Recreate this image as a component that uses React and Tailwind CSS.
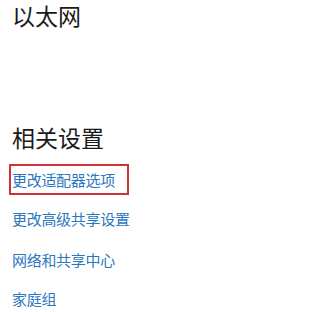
export default function App() {
  const font = { fontFamily: '"Noto Sans CJK SC", "Noto Sans", sans-serif' };
  return (
    <div className="w-[305px] h-[312px] bg-white overflow-hidden" style={font}>
      <div className="flex flex-col pl-[12px] pt-[2px]">
        <div className="text-[23px] leading-[26px] text-[#1a1a1a]">以太网</div>
        <div className="text-[23px] leading-[30px] text-[#1a1a1a] mt-[94px]">相关设置</div>
        <div className="flex flex-col mt-[12px]">
          <div className="-ml-[3px] w-[120px] h-[31px] border-2 border-[#d0303a] flex items-center pl-[1px]">
            <span className="text-[15px] leading-[20px] text-[#2a78c0] tracking-[-0.3px]">更改适配器选项</span>
          </div>
          <div className="text-[15px] leading-[20px] text-[#2a78c0] mt-[14px] tracking-[-0.3px]">更改高级共享设置</div>
          <div className="text-[15px] leading-[20px] text-[#2a78c0] mt-[21px] tracking-[-0.3px]">网络和共享中心</div>
          <div className="text-[15px] leading-[20px] text-[#2a78c0] mt-[19px] tracking-[-0.3px]">家庭组</div>
        </div>
      </div>
    </div>
  );
}
